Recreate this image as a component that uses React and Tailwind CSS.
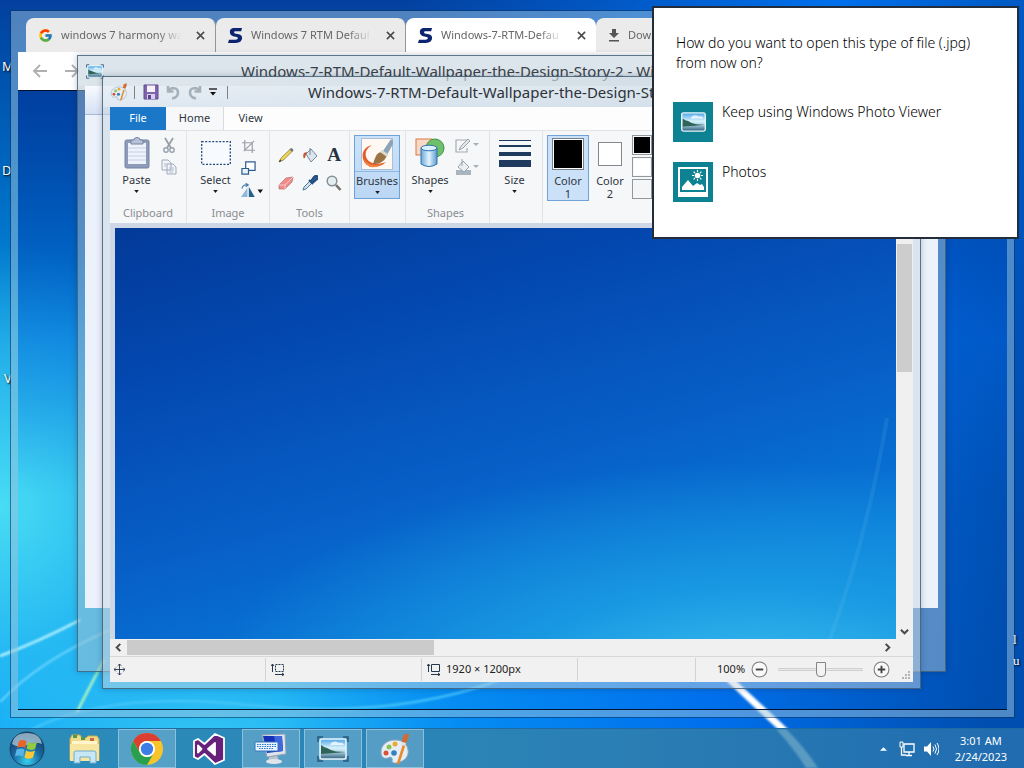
import React from "react";
import { FcGoogle } from "react-icons/fc";

function Wallpaper() {
  return (
    <div className="absolute inset-0 bg-linear-to-b from-[#03409f] via-[#0a90e0] via-45% to-[#08a2fa]">
      <div className="absolute inset-0 bg-[radial-gradient(ellipse_24%_34%_at_0%_66%,#48dcf4,transparent)]" />
      <div className="absolute inset-0 bg-[radial-gradient(ellipse_26%_20%_at_20%_98%,#38c8f2,transparent)]" />
      <div className="absolute inset-0 bg-[linear-gradient(100deg,transparent_35%,#0070ec_72%,#004eb0_96%)]" />
      <svg className="absolute inset-0 h-full w-full" viewBox="0 0 1024 768" preserveAspectRatio="none" aria-hidden="true">
        <defs>
          <filter id="soft"><feGaussianBlur stdDeviation="1" /></filter>
        </defs>
        <g fill="none" filter="url(#soft)">
          <path d="M0 656Q38 642 80 620" stroke="#bdf4ff" strokeWidth="2.500" />
          <path d="M0 702Q40 660 110 630" stroke="#7fdcff" strokeWidth="1.500" />
          <path d="M77 712Q88 690 104 660" stroke="#b4f9bd" strokeWidth="2.500" />
          <path d="M30 730Q110 690 250 705T500 680" stroke="#49c8fa" strokeWidth="2" />
          <path d="M724 674Q760 708 786 732" stroke="#fff" strokeWidth="7" />
        </g>
      </svg>
    </div>
  );
}

function DesktopLabel({ className, children }) {
  return (
    <span className={"absolute w-[11px] overflow-hidden text-[13px] leading-4 text-white [text-shadow:1px_1px_2px_#000] " + className}>
      {children}
    </span>
  );
}

function SiteMark() {
  return (
    <svg viewBox="0 0 16 18" className="h-[17px] w-[15px] shrink-0" aria-hidden="true">
      <path d="M15 1H7C3 1 2 3 2 5.500S4 10 8 10.300C10 10.500 10.500 11 10.500 12S9.500 13.500 8 13.500H1L0 17H8C13 17 15 14.500 15 11.500S13 7.500 8.500 7C7 6.800 6.500 6.300 6.500 5.500S7 4.500 8.500 4.500H14Z" fill="#0d2570" />
    </svg>
  );
}

function CloseGlyph() {
  return (
    <svg viewBox="0 0 10 10" className="h-[9px] w-[9px]" aria-hidden="true">
      <path d="M1 1L9 9M9 1L1 9" stroke="#4a4a4a" strokeWidth="1.700" />
    </svg>
  );
}

function BrowserTab({ icon, title, active }) {
  return (
    <div className={"flex h-full w-[190px] shrink-0 items-center gap-2 rounded-t-lg pl-3 pr-[5px] " + (active ? "bg-white" : "border-r border-[#8f979c] bg-[#ebebeb]")}>
      {icon}
      <button className="min-w-0 flex-1 overflow-hidden whitespace-nowrap text-left text-[11px] text-[#666] [mask-image:linear-gradient(to_right,#000_80%,transparent)]">
        {title}
      </button>
      <button className="flex w-5 justify-center" aria-label={"Close " + title}>
        <CloseGlyph />
      </button>
    </div>
  );
}

function BrowserWindow() {
  return (
    <section aria-label="Browser" className="absolute top-[11px] right-[10px] bottom-[11px] left-[11px] flex flex-col border-[7px] border-[#9cc2dc]/50 outline outline-[#0a3560]/60">
      <div className="flex h-[34px] shrink-0 overflow-hidden bg-[#9cc2dc]/50 pl-2">
        <BrowserTab icon={<FcGoogle className="h-[15px] w-[15px] shrink-0" />} title="windows 7 harmony wa" />
        <BrowserTab icon={<SiteMark />} title="Windows 7 RTM Defaul" />
        <BrowserTab icon={<SiteMark />} title="Windows-7-RTM-Defau" active />
        <BrowserTab
          icon={
            <svg viewBox="0 0 12 14" className="h-[14px] w-3 shrink-0" aria-hidden="true">
              <path d="M4 1H8V5H11L6 10L1 5H4ZM1 12H11V13.500H1Z" fill="#555" />
            </svg>
          }
          title="Downloads"
        />
      </div>
      <div className="flex h-[38px] shrink-0 items-center gap-4 bg-white pl-[14px]">
        {["M15 8H2M8 2L2 8L8 14", "M1 8H14M8 2L14 8L8 14"].map((d, i) => (
          <button key={d} aria-label={i ? "Forward" : "Back"}>
            <svg viewBox="0 0 16 16" className="h-4 w-4" fill="none" stroke="#b0b0b0" strokeWidth="1.800"><path d={d} /></svg>
          </button>
        ))}
      </div>
      <div className="flex-1 border-y border-[#06132b] bg-linear-to-b from-[#00389a]/75 via-[#0060d8]/40 via-40% to-transparent to-65%" />
    </section>
  );
}

function PhotoGlyph({ className, frame }) {
  return (
    <svg viewBox="0 0 32 26" className={className} aria-hidden="true">
      <defs>
        <linearGradient id="photoSky" x1="0" y1="0" x2="0" y2="1">
          <stop offset="0" stopColor="#4ba5e6" />
          <stop offset=".45" stopColor="#d8f2fc" />
          <stop offset=".6" stopColor="#b8dcea" />
          <stop offset="1" stopColor="#315f7d" />
        </linearGradient>
      </defs>
      {frame && <path d="M1 6V1H6M26 1H31V6M31 20V25H26M6 25H1V20" fill="none" stroke="#26597f" strokeWidth="1.500" />}
      <rect x="3" y="3" width="26" height="20" rx="2" fill="url(#photoSky)" stroke="#eaf6fb" strokeWidth="1.500" />
      <path d="M4 9L7 11L10 12L14 14L19 15.500L28 16L18 17L4 18Z" fill="#2f6558" />
      <path d="M14 7Q18 4 22 7Q26 6 27 9L13 9Z" fill="#fff" opacity=".75" />
    </svg>
  );
}

function PhotoViewerWindow() {
  return (
    <section aria-label="Windows Photo Viewer" className="absolute top-[55px] right-[78px] bottom-[56px] left-[77px] flex flex-col border border-[#3f5b70]/80 bg-[#a9bfcd]/50 px-[7px] shadow-[0_0_6px_rgba(0,20,60,.25)]">
      <header className="-mx-[7px] flex h-[30px] shrink-0 items-center overflow-hidden bg-white/20 px-[7px]">
        <PhotoGlyph frame className="ml-px h-[15px] w-[18px] shrink-0" />
        <h2 className="ml-[137px] whitespace-nowrap text-[15px] leading-5 text-[#3a4148]">
          Windows-7-RTM-Default-Wallpaper-the-Design-Story-2 - Windows Photo Viewer
        </h2>
      </header>
      <div className="h-[29px] shrink-0 border-b border-[#a9bbd3] bg-linear-to-b from-[#f8fbff] to-[#d5e1f3]" />
      <div className="flex-1 bg-[#ecf2fb]" />
      <div className="h-[63px] shrink-0" />
    </section>
  );
}

function Palette({ className }) {
  return (
    <svg viewBox="0 0 32 32" className={className} aria-hidden="true">
      <path d="M16 7C7 7 2 13 2 19C2 25 6 26 9 25C12 23 14 25 13 28C13 30 17 31 21 29C27 27 30 22 29 17C28 10 23 7 16 7Z" fill="#e6eef5" stroke="#8ba8bf" strokeWidth="1" />
      <circle cx="7" cy="20" r="2.500" fill="#d75237" />
      <circle cx="10" cy="14" r="2.500" fill="#8cc152" />
      <circle cx="16" cy="11" r="2.500" fill="#e9ab33" />
      <circle cx="15" cy="20" r="2.800" fill="#337fc4" />
      <path d="M26 9L19 31" stroke="#e58b2d" strokeWidth="2.600" />
      <path d="M23 9L24 3Q27 0 30 1Q30 6 27 10Z" fill="#cf6c35" />
      <path d="M23 9L27 10L26 13L22 12Z" fill="#d9e1e8" />
    </svg>
  );
}

function Caret() {
  return (
    <svg viewBox="0 0 6 4" className="h-[3px] w-[5px]" aria-hidden="true">
      <path d="M0 0H6L3 4Z" fill="#1a1a1a" />
    </svg>
  );
}

function Icon({ label, children, box = "0 0 16 16", className = "h-4 w-4" }) {
  return (
    <button aria-label={label} className="flex">
      <svg viewBox={box} className={className} fill="none">{children}</svg>
    </button>
  );
}

function QuickBar() {
  return (
    <header className="-mx-[7px] flex h-[30px] shrink-0 items-center overflow-hidden whitespace-nowrap bg-linear-to-r from-white/30 to-[#c6d4dc]/30 px-[7px]">
      <Palette className="h-[18px] w-[18px] shrink-0" />
      <span className="ml-[6px] h-[13px] w-px shrink-0 bg-[#77838d]" />
      <div className="ml-2 flex shrink-0 items-center gap-[6px]">
        <Icon label="Save">
          <path d="M1 1H15V15H1Z" fill="#8065ae" stroke="#604b91" />
          <path d="M4 1.500H12V8H4Z" fill="#f4f1fb" />
          <path d="M4 10H12V15H4Z" fill="#d7cfe9" />
          <path d="M5 11H8V15H5Z" fill="#5a4690" />
        </Icon>
        <Icon label="Undo">
          <path d="M3 2V7.500H8.500M3.500 7C6 3 13 3 13 8.500C13 12 10 14 7 14.500" stroke="#a5b1bb" strokeWidth="2.600" />
        </Icon>
        <Icon label="Redo">
          <path d="M13 2V7.500H7.500M12.500 7C10 3 3 3 3 8.500C3 12 6 14 9 14.500" stroke="#a5b1bb" strokeWidth="2.600" />
        </Icon>
      </div>
      <Icon label="Customize toolbar" box="0 0 8 8" className="ml-[6px] h-2 w-2">
        <path d="M0 1H8" stroke="#111" strokeWidth="1.300" />
        <path d="M1 4H7L4 7.500Z" fill="#111" />
      </Icon>
      <span className="ml-[10px] h-[13px] w-px shrink-0 bg-[#77838d]" />
      <h2 className="ml-20 text-[15px] leading-5 text-[#2c3238]">
        Windows-7-RTM-Default-Wallpaper-the-Design-Story-2 - Paint
      </h2>
    </header>
  );
}

function Group({ name, className, children }) {
  return (
    <div className={"flex shrink-0 flex-col border-r border-[#e2e3e5] pt-1 " + className}>
      <div className="flex flex-1 justify-center">{children}</div>
      <div className="h-5 text-center text-[11px] leading-5 text-[#8a8d91]">{name}</div>
    </div>
  );
}

function BigButton({ label, children, className = "" }) {
  return (
    <button className={"flex flex-col items-center text-[11px] leading-4 text-[#2f3640] " + className}>
      <span className="flex h-9 items-center">{children}</span>
      <span className="-mx-2 mt-px">{label}</span>
      <span className="mt-[2px]"><Caret /></span>
    </button>
  );
}

function Ribbon() {
  return (
    <>
      <nav className="flex h-[23px] shrink-0 bg-[#fdfdfe] text-[11px] text-[#2f3640]">
        <button className="w-14 bg-[#1b78c9] text-white">File</button>
        <button className="w-[58px] border-r border-[#dadbdc] bg-[#f7f8fa]">Home</button>
        <button className="w-[53px]">View</button>
      </nav>
      <div className="flex h-[93px] shrink-0 overflow-hidden border-t border-[#e1e3e5] bg-[#f6f7f9]">
        <Group name="Clipboard" className="w-[77px]">
          <BigButton label="Paste" className="w-[34px]">
            <svg viewBox="0 0 26 32" className="h-8 w-[26px]">
              <rect x="1" y="3" width="24" height="28" rx="1.500" fill="#8d9bb8" stroke="#7384a4" />
              <rect x="4" y="6" width="18" height="21" fill="#eef2fa" />
              <path d="M4 11H22M4 15H22M4 19H22M4 23H22" stroke="#c6d1e6" />
              <path d="M7 3H10Q10 .5 13 .5T16 3H19V7H7Z" fill="#b8c2d6" stroke="#7384a4" />
            </svg>
          </BigButton>
          <div className="ml-[7px] flex flex-col gap-[6px] pt-[2px]">
            <Icon label="Cut">
              <path d="M4 1L10 11M12 1L6 11" stroke="#97a0a8" strokeWidth="1.800" />
              <circle cx="5" cy="13" r="2.200" stroke="#98a2ac" strokeWidth="1.400" />
              <circle cx="11" cy="13" r="2.200" stroke="#98a2ac" strokeWidth="1.400" />
            </Icon>
            <Icon label="Copy">
              <path d="M1 1H7L10 4V11H1ZM6 5H12L15 8V15H6Z" fill="#f1f4f9" stroke="#9eabba" />
              <path d="M3 5H6M3 7H5M8 9H13M8 11H13M8 13H12" stroke="#b4bfcc" />
            </Icon>
          </div>
        </Group>
        <Group name="Image" className="w-[83px]">
          <BigButton label="Select" className="w-9">
            <svg viewBox="0 0 30 24" className="h-6 w-[30px]">
              <rect x=".7" y=".7" width="28.600" height="22.600" fill="#f7fbff" stroke="#24487c" strokeWidth="1.300" strokeDasharray="2 1.500" />
            </svg>
          </BigButton>
          <div className="-mr-1 ml-[7px] flex flex-col gap-[7px] pt-1">
            <Icon label="Crop" className="h-[15px] w-[15px]">
              <path d="M4 1V12H15M1 4H12V15M3 13L14 2" stroke="#9c9ea8" strokeWidth="1.300" />
            </Icon>
            <Icon label="Resize" className="h-[15px] w-[15px]">
              <path d="M5 1H15V10H5Z" fill="#fff" stroke="#2c5e8c" strokeWidth="1.300" />
              <path d="M1 8H8V14H1Z" fill="#e9f2fb" stroke="#2c5e8c" strokeWidth="1.300" />
            </Icon>
            <Icon label="Rotate" box="0 0 24 16" className="h-[15px] w-[22px]">
              <path d="M0 15H7V5Z" fill="#8fb7d8" />
              <path d="M8.500 15H15L8.500 4Z" fill="#24618d" />
              <path d="M1 6Q2 1 7 2M5 0L8 2L5 4" stroke="#457ba8" strokeWidth="1.200" />
              <path d="M18 7H24L21 11Z" fill="#111" />
            </Icon>
          </div>
        </Group>
        <Group name="Tools" className="w-[80px]">
          <div className="grid h-fit grid-cols-3 gap-x-2 gap-y-3 pt-3">
            <Icon label="Pencil">
              <path d="M1 15L3.500 10.500L12 2.500L14 4.500L5.500 13Z" fill="#ecd75b" stroke="#8b7836" strokeWidth=".8" />
              <path d="M1 15L2 12.500L3.500 14Z" fill="#333" />
              <path d="M11.500 2.500L13 1Q15 1 15.500 3.500L14 5Z" fill="#777" />
            </Icon>
            <Icon label="Fill with color">
              <path d="M4 7L9 2L15 9L9 15Z" fill="#dbe6ee" stroke="#758797" />
              <path d="M8 1V8" stroke="#758797" />
              <path d="M5 5Q0 5 1.500 11Q3 12 3.500 9Z" fill="#c65535" />
            </Icon>
            <Icon label="Text">
              <text x="8" y="14" textAnchor="middle" fontFamily="Liberation Serif, serif" fontWeight="700" fontSize="19" fill="#263442">A</text>
            </Icon>
            <Icon label="Eraser">
              <path d="M1 10L8 3L15 2L14 7L7 14L1 14Z" fill="#ef8c8c" stroke="#bf6868" strokeWidth=".7" />
              <path d="M1 10L7 10L15 2M7 10V14" stroke="#fac7c4" />
            </Icon>
            <Icon label="Color picker">
              <path d="M1 15L2 12L8 6L10 8L4 14Z" fill="#cfe1ef" stroke="#53789a" />
              <path d="M7 5L11 9M9 6L12 2Q14 0 15.500 1.500T14 5L10.500 8" stroke="#234e7d" strokeWidth="2" fill="#315f92" />
            </Icon>
            <Icon label="Magnifier">
              <circle cx="6" cy="6" r="4.800" fill="#e4edf2" stroke="#868e96" strokeWidth="1.500" />
              <path d="M10 10L14.500 15" stroke="#77716c" strokeWidth="2.600" />
            </Icon>
          </div>
        </Group>
        <Group name="" className="w-14 pr-px">
          <BigButton label="Brushes" className="h-16 w-[46px] border border-[#6fa3d8] bg-linear-to-b from-[#cbe2fa] to-[#bcd7f4]">
            <span className="flex h-9 w-11 items-center justify-center border-b border-[#8fb6e0]">
              <svg viewBox="0 0 32 32" className="h-8 w-8 bg-[#fff8f3]">
                <rect x=".5" y=".5" width="31" height="31" fill="none" stroke="#a9bfd8" />
                <path d="M11 7C2 9 -1 18 4 25C8 31 19 30 25 24C17 27 9 26 6 21C3 15 5 11 11 7Z" fill="#e35c2a" />
                <path d="M3 21Q10 31 22 25Q17 30 9 29Q5 27 3 21Z" fill="#f08742" />
                <path d="M22 13L30 1L32 3L32 6L26 17Z" fill="#8ca4b8" />
                <path d="M21 14L26 18Q21 27 12 26Q13 22 15 18Q17 14 21 14Z" fill="#9b7445" />
                <path d="M21 12L27 16L26 19L19 14Z" fill="#dbd8cf" />
              </svg>
            </span>
          </BigButton>
        </Group>
        <Group name="Shapes" className="w-[84px] pr-1">
          <BigButton label="Shapes" className="w-9">
            <svg viewBox="0 0 30 30" className="h-[30px] w-[30px]">
              <defs>
                <linearGradient id="tube"><stop stopColor="#69a9dc" /><stop offset=".5" stopColor="#e2f3ff" /><stop offset="1" stopColor="#5b9bd0" /></linearGradient>
              </defs>
              <rect x="1" y="1" width="16" height="16" fill="#f9d8c6" stroke="#dc7844" />
              <circle cx="20" cy="10" r="9" fill="#70bf6a" stroke="#3f934c" />
              <path d="M6 10V26Q14 31 22 26V10Z" fill="url(#tube)" stroke="#2f74ad" />
              <ellipse cx="14" cy="10" rx="8" ry="2.800" fill="#dbefff" stroke="#2f74ad" />
            </svg>
          </BigButton>
          <div className="ml-[7px] flex flex-col gap-[5px] pt-[3px]">
            <Icon label="Outline" box="0 0 24 16" className="h-4 w-6">
              <path d="M12 2H1V14H12V10" stroke="#a4acb4" strokeWidth="1.200" />
              <path d="M4 12L6 8L13 1L15 3L8 10Z" fill="#e3e6e9" stroke="#9ba4ad" />
              <path d="M18 5H24L21 8Z" fill="#a9afb5" />
            </Icon>
            <Icon label="Fill" box="0 0 24 16" className="h-4 w-6">
              <path d="M1 11H16V16H1Z" fill="#abb5bf" />
              <path d="M3 8L8 2L14 8L9 13Z" fill="#eceff2" stroke="#98a4af" />
              <path d="M7 0V7" stroke="#98a4af" />
              <path d="M18 6H24L21 9Z" fill="#a9afb5" />
            </Icon>
          </div>
        </Group>
        <Group name="" className="w-[53px] pr-[3px]">
          <BigButton label="Size" className="w-10">
            <svg viewBox="0 0 32 28" className="h-7 w-8" fill="#1e3a5f">
              <path d="M0 1H32V2H0ZM0 6H32V8H0ZM0 13H32V17H0ZM0 21H32V28H0Z" />
            </svg>
          </BigButton>
        </Group>
        <div className="flex flex-1 shrink-0 items-start gap-[3px] pl-1 pt-1 text-[11px] leading-[13px] text-[#2f3640]">
          <button className="flex h-[66px] w-[42px] shrink-0 flex-col items-center gap-1 border border-[#6fa3d8] bg-[#cbe1f8] pt-[2px]">
            <span className="h-8 w-8 border border-[#777f88] bg-black outline -outline-offset-2 outline-white" />
            <span>Color<br />1</span>
          </button>
          <button className="flex h-[66px] w-9 shrink-0 flex-col items-center gap-2 pt-[7px]">
            <span className="h-6 w-6 border border-[#83888e] bg-white" />
            <span>Color<br />2</span>
          </button>
          <div className="ml-px grid grid-cols-[repeat(10,20px)] gap-[2px]">
            {["black", "#7f7f7f", "#880015", "#ed1c24", "#ff7f27", "#fff200", "#22b14c", "#00a2e8", "#3f48cc", "#a349a4",
              "white", "#c3c3c3", "#b97a57", "#ffaec9", "#ffc90e", "#efe4b0", "#b5e61d", "#99d9ea", "#7092be", "#c8bfe7",
              "#f5f6f7", "#f5f6f7", "#f5f6f7", "#f5f6f7", "#f5f6f7", "#f5f6f7", "#f5f6f7", "#f5f6f7", "#f5f6f7", "#f5f6f7"].map((c, i) => (
              <button key={i} aria-label={"Swatch " + (i + 1)} className="h-5 w-5 border border-[#92979c] p-px">
                <span className="block h-full" style={{ background: c }} />
              </button>
            ))}
          </div>
        </div>
      </div>
    </>
  );
}

function Chevron({ d, label, className }) {
  return (
    <button aria-label={label} className={"flex shrink-0 items-center justify-center " + className}>
      <svg viewBox="0 0 10 10" className="h-[9px] w-[9px]" fill="none" stroke="#4a4a4a" strokeWidth="2.200"><path d={d} /></svg>
    </button>
  );
}

function CanvasArea() {
  return (
    <div className="flex min-h-0 flex-1 flex-col bg-[#cdd7e6] pt-[5px]">
      <div className="flex min-h-0 flex-1 pl-[5px]">
        <div className="relative flex-1 bg-[radial-gradient(ellipse_70%_55%_at_82%_112%,#3cc0f0_0%,#20a6e6b0_45%,transparent_100%),linear-gradient(165deg,#033a98_0%,#0348b0_25%,#075fc6_55%,#0878d8_82%,#0a80dc_100%)]">
          <svg viewBox="0 0 781 411" preserveAspectRatio="none" className="absolute inset-0 h-full w-full" aria-hidden="true">
            <path d="M772 190Q752 310 715 411" fill="none" stroke="#7fd0f5" strokeOpacity=".12" strokeWidth="4" />
          </svg>
        </div>
        <div className="flex w-[17px] shrink-0 flex-col bg-[#f0f0f0]">
          <Chevron label="Scroll up" d="M1 7L5 3L9 7" className="h-4" />
          <div className="mx-px h-32 bg-[#cdcdcd]" />
          <div className="flex-1" />
          <Chevron label="Scroll down" d="M1 3L5 7L9 3" className="h-4" />
        </div>
      </div>
      <div className="flex h-[17px] shrink-0 bg-[#f0f0f0] pr-[17px]">
        <Chevron label="Scroll left" d="M7 1L3 5L7 9" className="w-[17px]" />
        <div className="my-px w-[39%] bg-[#cbcbcb]" />
        <div className="flex-1" />
        <Chevron label="Scroll right" d="M3 1L7 5L3 9" className="w-[17px]" />
      </div>
    </div>
  );
}

function StatusBar() {
  return (
    <footer className="flex h-[26px] shrink-0 items-center border-t border-[#d7d7d7] bg-[#f1f1f1] text-[11px] text-[#222]">
      <div className="flex h-[23px] w-[156px] items-center border-r border-[#d2d2d2] pl-1">
        <svg viewBox="0 0 12 12" className="h-[11px] w-[11px]" fill="none" stroke="#26384b">
          <path d="M6 0V12M0 6H12M4 2L6 0L8 2M4 10L6 12L8 10M2 4L0 6L2 8M10 4L12 6L10 8" />
        </svg>
      </div>
      <div className="flex h-[23px] w-[156px] items-center border-r border-[#d2d2d2] pl-[5px]">
        <svg viewBox="0 0 14 13" className="h-[13px] w-[14px]" fill="none" stroke="#26384b">
          <path d="M4.500 1.500H12.500V8.500H4.500Z" strokeDasharray="2 1" /><path d="M1.500 9V1M0 3L1.500 1L3 3M4 11.500H13M11 10L13 11.500L11 13" />
        </svg>
      </div>
      <div className="flex h-[23px] w-[156px] items-center gap-[5px] border-r border-[#d2d2d2] pl-[5px]">
        <svg viewBox="0 0 14 13" className="h-[13px] w-[14px]" fill="none" stroke="#26384b">
          <path d="M4.500 1.500H12.500V8.500H4.500Z" /><path d="M1.500 9V1M0 3L1.500 1L3 3M4 11.500H13M11 10L13 11.500L11 13" />
        </svg>
        1920 × 1200px
      </div>
      <div className="h-[23px] flex-1 border-r border-[#d2d2d2]" />
      <div className="flex h-full w-[217px] shrink-0 items-center pl-[21px]">
        <span className="w-[34px]">100%</span>
        <Icon label="Zoom out" className="h-[17px] w-[17px]">
          <circle cx="8" cy="8" r="7" fill="#f9f9f9" stroke="#7b7b7b" /><path d="M4.500 8H11.500" stroke="#444" strokeWidth="1.800" />
        </Icon>
        <input
          type="range"
          aria-label="Zoom"
          defaultValue="50"
          className="mx-[10px] h-[3px] w-[85px] appearance-none border-y border-[#cfcfcf] bg-[#e9e9e9] [&::-webkit-slider-thumb]:h-[15px] [&::-webkit-slider-thumb]:w-[10px] [&::-webkit-slider-thumb]:appearance-none [&::-webkit-slider-thumb]:rounded-b-[4px] [&::-webkit-slider-thumb]:border [&::-webkit-slider-thumb]:border-[#848484] [&::-webkit-slider-thumb]:bg-[#f2f2f2]"
        />
        <Icon label="Zoom in" className="h-[17px] w-[17px]">
          <circle cx="8" cy="8" r="7" fill="#f9f9f9" stroke="#7b7b7b" /><path d="M4.500 8H11.500M8 4.500V11.500" stroke="#444" strokeWidth="1.800" />
        </Icon>
        <svg viewBox="0 0 9 9" className="ml-auto mr-[2px] mb-[2px] h-[9px] w-[9px] self-end" fill="#b5b5b5" aria-hidden="true">
          <path d="M6 0H8V2H6ZM3 3H5V5H3ZM6 3H8V5H6ZM0 6H2V8H0ZM3 6H5V8H3ZM6 6H8V8H6Z" />
        </svg>
      </div>
    </footer>
  );
}

function PaintWindow() {
  return (
    <section aria-label="Paint" className="absolute top-[76px] right-[103px] bottom-[39px] left-[102px] flex flex-col border border-[#3c566b]/80 bg-[#c6d5e2]/50 px-[7px] pb-[6px] shadow-[0_0_6px_rgba(0,20,60,.25)]">
      <QuickBar />
      <Ribbon />
      <CanvasArea />
      <StatusBar />
    </section>
  );
}

function OpenWithDialog() {
  return (
    <section role="dialog" aria-labelledby="open-title" className="absolute top-[6px] right-[5px] h-[233px] w-[367px] border-2 border-[#222c3b] bg-white text-[14px] font-light leading-5 text-black">
      <h1 id="open-title" className="px-[22px] pt-[25px]">How do you want to open this type of file (.jpg) from now on?</h1>
      <div className="flex flex-col gap-5 px-[19px] pt-[29px]">
        <button className="flex h-10 items-start gap-[9px] text-left">
          <span className="flex h-10 w-10 items-center justify-center bg-[#0d8292]"><PhotoGlyph className="h-[24px] w-[29px]" /></span>
          Keep using Windows Photo Viewer
        </button>
        <button className="flex h-10 items-start gap-[9px] text-left">
          <span className="flex h-10 w-10 items-center justify-center bg-[#0d8292]">
            <svg viewBox="0 0 30 30" className="h-[30px] w-[30px]" aria-hidden="true">
              <path fillRule="evenodd" d="M0 0H30V30H0ZM2 2V25H28V2Z" fill="#fff" />
              <path d="M4 23V20L10 13L15 19L19 16L22 18L24 17L26 20V23Z" fill="#fff" />
              <circle cx="19.500" cy="8.500" r="2.800" fill="#fff" />
              <path d="M19.500 3V5M19.500 12V14M14 8.500H16M23 8.500H25M15.600 4.600L17 6M22 11L23.400 12.400M15.600 12.400L17 11M22 6L23.400 4.600" stroke="#fff" strokeWidth="1.100" />
            </svg>
          </span>
          Photos
        </button>
      </div>
    </section>
  );
}

function TaskButton({ label, open, children }) {
  return (
    <button aria-label={label} className={"flex h-[39px] w-[58px] shrink-0 items-center justify-center border " + (open ? "border-[#9fd0ea]/70 bg-white/20" : "border-transparent")}>
      {children}
    </button>
  );
}

function Taskbar() {
  return (
    <footer className="relative flex h-10 shrink-0 items-center border-t border-[#1d6ba0] bg-[linear-gradient(90deg,#2b8cba_0%,#2b88b8_25%,#2a7fb4_60%,#216bb0_100%)]">
      <svg viewBox="0 0 1024 40" preserveAspectRatio="none" className="absolute inset-0 h-full w-full" aria-hidden="true">
        <path d="M776 0H786Q804 18 818 40H806Q794 20 776 0Z" fill="#8fc0d0" opacity=".5" filter="url(#soft)" />
      </svg>
      <button aria-label="Start" className="relative flex w-[54px] shrink-0 justify-center">
        <svg viewBox="0 0 36 36" className="h-9 w-9">
          <defs>
            <radialGradient id="orb" cx=".5" cy=".85" r=".85">
              <stop offset="0" stopColor="#35d0f0" /><stop offset=".5" stopColor="#19679f" /><stop offset="1" stopColor="#16365c" />
            </radialGradient>
          </defs>
          <circle cx="18" cy="18" r="17" fill="url(#orb)" stroke="#174565" />
          <path d="M3 13Q5 2 18 2T33 13Q25 10 18 14T3 13Z" fill="#d7edf5" opacity=".6" />
          <path d="M10 10Q14 8 17.500 10.500L16 17Q12 14.500 8 17Z" fill="#ec6328" />
          <path d="M19 11Q23 13.500 28 11L26 18Q22 20 17.500 17.500Z" fill="#94ca3d" />
          <path d="M7.500 18.500Q12 16.500 15.500 18.500L14 25.500Q10 23.500 6 25.500Z" fill="#58b5ea" />
          <path d="M17 19.500Q21 22 26 19.500L24 26.500Q19.500 29 15.500 26.500Z" fill="#fbc937" />
        </svg>
      </button>
      <nav className="relative ml-[2px] flex gap-1">
        <TaskButton label="File Explorer">
          <svg viewBox="0 0 34 32" className="h-8 w-[34px]">
            <path d="M2 6V27H31V6L29 3H20L18 5H14L12 2H4Z" fill="#efd98a" stroke="#c9a851" />
            <path d="M4 8H29V12H4Z" fill="#fff6cc" />
            <path d="M2 11H31V28H2Z" fill="#f8e6a0" />
            <path d="M5 2H9V5H5ZM13 4H17V7H13Z" fill="#4d9a4f" />
            <path d="M22 5H26V8H22Z" fill="#c96743" />
            <path d="M6 30V20Q6 18 8 18H26Q28 18 28 20V30H22V24H12V30Z" fill="#c7e7f5" stroke="#73acd0" />
          </svg>
        </TaskButton>
        <TaskButton label="Chrome" open>
          <svg viewBox="0 0 32 32" className="h-8 w-8">
            <circle cx="16" cy="16" r="16" fill="#f7c52b" />
            <path d="M2.140 8A16 16 0 0 1 29.860 8H16A8 8 0 0 0 9.070 20Z" fill="#dc3f32" />
            <path d="M2.140 8A16 16 0 0 0 16 32L22.930 20A8 8 0 0 1 9.070 20Z" fill="#29a04f" />
            <circle cx="16" cy="16" r="8" fill="#fff" /><circle cx="16" cy="16" r="6.200" fill="#3d7de6" />
          </svg>
        </TaskButton>
        <TaskButton label="Visual Studio">
          <svg viewBox="0 0 32 32" className="h-8 w-8">
            <path fillRule="evenodd" d="M22 1L31 5V27L22 31L11.500 21L5 26L1 24V8L5 6L11.500 11ZM22 10L15 16L22 22ZM5 12.500V19.500L8.500 16Z" fill="#68217a" stroke="#fff" strokeWidth="1.800" strokeLinejoin="round" />
            <path d="M22 10L15 16L22 22ZM5 12.500V19.500L8.500 16Z" fill="#fff" />
          </svg>
        </TaskButton>
        <TaskButton label="On-Screen Keyboard" open>
          <svg viewBox="0 0 34 32" className="h-8 w-[34px]">
            <path d="M16 22H23L25 28H14Z" fill="#b9c3ce" /><ellipse cx="20" cy="28.500" rx="8" ry="2.500" fill="#dfe5eb" />
            <path d="M8 2L31 1L32 21L13 24Z" fill="#dde4ec" stroke="#8fa2b7" />
            <path d="M9 3L28 3L29 18L13 20Z" fill="#1431b5" />
            <path d="M20 3H28L29 18L23 19Z" fill="#3f67dc" />
            <rect x="1" y="9" width="23" height="9" rx="1" fill="#eaf5ff" stroke="#3475bd" />
            <path d="M3 11.500H22M3 13.500H22M5 15.500H20" stroke="#2577c9" strokeDasharray="1.500 1" />
          </svg>
        </TaskButton>
        <TaskButton label="Windows Photo Viewer" open><PhotoGlyph frame className="h-[26px] w-8" /></TaskButton>
        <TaskButton label="Paint" open><Palette className="h-8 w-8" /></TaskButton>
      </nav>
      <div className="relative ml-auto flex items-center pr-[17px] text-white">
        <Icon label="Show hidden icons" box="0 0 8 4" className="h-1 w-[7px]"><path d="M0 4L4 0L8 4Z" fill="#fff" /></Icon>
        <Icon label="Network" className="ml-3 h-4 w-4">
          <path d="M5 3H15V11H5ZM10 11V14M7 14.500H13M2.500 6V14H7" stroke="#fff" strokeWidth="1.300" />
          <path d="M1 1H4V6H1Z" fill="#2b78ac" stroke="#fff" />
        </Icon>
        <Icon label="Volume" className="ml-2 h-4 w-4">
          <path d="M1 5.500H4L8 1V15L4 10.500H1Z" fill="#fff" />
          <path d="M10 5.500Q12 8 10 10.500M12 3.500Q15 8 12 12.500M14 2Q18 8 14 14" stroke="#fff" />
        </Icon>
        <time className="ml-4 text-center text-[11px] leading-4">3:01 AM<br />2/24/2023</time>
      </div>
    </footer>
  );
}

export default function App() {
  return (
    <main className="relative flex h-screen min-h-96 flex-col overflow-hidden font-['Noto_Sans','Open_Sans',sans-serif]">
      <Wallpaper />
      <div className="relative min-h-0 flex-1">
        <DesktopLabel className="top-[58px] left-0 pl-[2px]">M</DesktopLabel>
        <DesktopLabel className="top-[162px] left-0 pl-[2px]">D</DesktopLabel>
        <DesktopLabel className="top-[370px] left-0 pl-1">V</DesktopLabel>
        <BrowserWindow />
        <DesktopLabel className="top-[632px] right-0 font-['Liberation_Serif',serif]">l</DesktopLabel>
        <DesktopLabel className="top-[653px] right-0 font-['Liberation_Serif',serif]">u</DesktopLabel>
        <PhotoViewerWindow />
        <PaintWindow />
        <OpenWithDialog />
      </div>
      <Taskbar />
    </main>
  );
}
